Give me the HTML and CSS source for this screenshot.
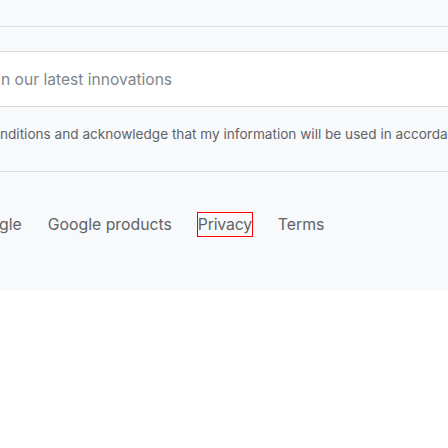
FILE: index.html
```html
<!DOCTYPE html>
<html>
<head>
<meta charset="utf-8">
<link rel="stylesheet" href="styles.css">
</head>
<body>
<div class="panel">
  <div class="row row-top"></div>
  <div class="row row-second"></div>
  <div class="row field"><span class="placeholder">n our latest innovations</span></div>
  <div class="row consent"><span class="consent-text">nditions and acknowledge that my information will be used in accordance</span></div>
  <nav class="footer">
    <a class="link">gle</a>
    <a class="link">Google products</a>
    <a class="link focused">Privacy</a>
    <a class="link">Terms</a>
  </nav>
</div>
</body>
</html>
```
FILE: styles.css
```css
html, body {
  margin: 0;
  padding: 0;
  background: #ffffff;
  overflow: hidden;
}
body {
  width: 448px;
  height: 448px;
  font-family: Inter, "Open Sans", Roboto, sans-serif;
}
.panel {
  background: #f8f9fa;
  height: 291px;
  overflow: hidden;
}
.row {
  box-sizing: content-box;
  border-bottom: 1px solid #dadce0;
  display: flex;
  align-items: center;
  white-space: nowrap;
  overflow: hidden;
}
.row-top {
  height: 26px;
}
.row-second {
  height: 24px;
}
.field {
  background: #ffffff;
  height: 54px;
}
.placeholder {
  font-size: 15.6px;
  color: #80868b;
  padding-left: 1px;
}
.consent {
  height: 64px;
  align-items: flex-start;
}
.consent-text {
  font-size: 13.6px;
  line-height: 20px;
  padding-top: 17px;
  color: #5f6368;
}
.footer {
  display: flex;
  align-items: flex-start;
  padding-top: 40px;
  gap: 24px;
  white-space: nowrap;
}
.link {
  font-size: 15.8px;
  line-height: 23px;
  color: #5f6368;
  border: 1px solid transparent;
}
.link:first-child {
  margin-left: -2px;
}
.focused {
  border-color: #ff0000;
  letter-spacing: -0.2px;
}
```
